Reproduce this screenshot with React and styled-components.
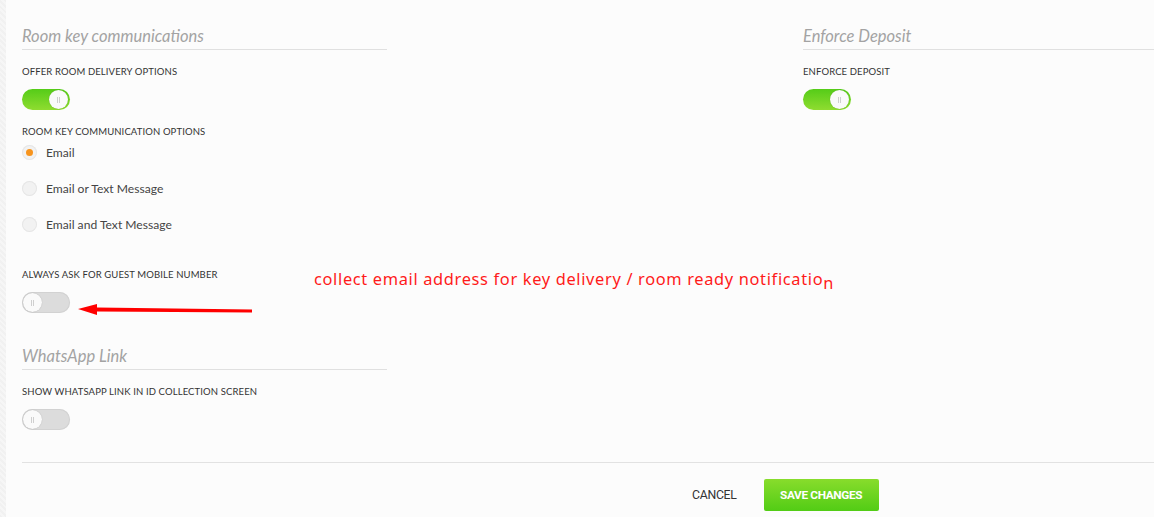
import React from "react";
import styled, { createGlobalStyle, css } from "styled-components";

const Global = createGlobalStyle`
  html, body { margin: 0; padding: 0; background: #fcfcfc; }
  body { font-family: Lato, "Open Sans", sans-serif; color: #333; overflow: hidden; }
  * { box-sizing: border-box; }
`;

const Page = styled.div`
  position: relative;
  width: 1154px;
  height: 517px;
  display: flex;
  background: #fcfcfc;
  overflow: hidden;
`;

const Strip = styled.div`
  width: 6px;
  flex: none;
  background: repeating-linear-gradient(45deg, #f1f1f1 0 2px, #f6f6f6 2px 4px);
`;

const Main = styled.div`
  flex: 1;
  padding: 26px 0 0 16px;
  display: flex;
  flex-direction: column;
`;

const Columns = styled.div`
  display: flex;
  gap: 416px;
`;

const Column = styled.div`
  width: ${(p) => p.$w}px;
  flex: none;
  display: flex;
  flex-direction: column;
`;

const SectionTitle = styled.div`
  font-style: italic;
  font-size: 16.5px;
  line-height: 20px;
  color: #a3a3a3;
  padding-bottom: 3px;
  border-bottom: 1px solid #e0e0e0;
  margin-top: ${(p) => p.$mt || 0}px;
`;

const Label = styled.div`
  font-size: 9.5px;
  line-height: 12px;
  letter-spacing: 0.12px;
  text-transform: uppercase;
  color: #333;
  margin-top: ${(p) => p.$mt}px;
`;

const Toggle = styled.div`
  margin-top: 11px;
  width: 48px;
  height: 21px;
  border-radius: 11px;
  position: relative;
  ${(p) =>
    p.$on
      ? css`
          background: linear-gradient(#55cc18, #8fdc30);
        `
      : css`
          background: #dcdcdc;
          box-shadow: inset 0 0 0 1px #d2d2d2;
        `}
`;

const Knob = styled.div`
  position: absolute;
  top: 1px;
  ${(p) => (p.$on ? "right: 2px;" : "left: 1px;")}
  width: 19px;
  height: 19px;
  border-radius: 50%;
  background: #fafafa;
  box-shadow: 0 0 1px rgba(0, 0, 0, 0.25);
  display: flex;
  align-items: center;
  justify-content: center;
  gap: 1px;
  &::before, &::after {
    content: "";
    width: 1px;
    height: 6px;
    background: #cfcfcf;
  }
`;

const RadioRow = styled.div`
  display: flex;
  align-items: center;
  height: 20px;
  margin-top: ${(p) => p.$mt}px;
  font-size: 12.1px;
  color: #444;
`;

const RadioCircle = styled.span`
  width: 15px;
  height: 15px;
  border-radius: 50%;
  background: #f2f2f2;
  box-shadow: inset 0 0 0 1px #e6e6e6;
  margin-right: 9px;
  display: flex;
  align-items: center;
  justify-content: center;
  &::after {
    content: "";
    display: ${(p) => (p.$checked ? "block" : "none")};
    width: 7px;
    height: 7px;
    border-radius: 50%;
    background: #f7941d;
  }
`;

const Footer = styled.div`
  margin-top: 32px;
  border-top: 1px solid #e2e2e2;
  padding-top: 16px;
  padding-left: 670px;
  display: flex;
  align-items: center;
`;

const CancelBtn = styled.button`
  border: none;
  background: none;
  font-family: Roboto, sans-serif;
  font-size: 12.3px;
  letter-spacing: -0.3px;
  color: #333;
  padding: 0;
  margin-right: 27px;
  cursor: pointer;
`;

const SaveBtn = styled.button`
  border: none;
  border-radius: 2px;
  width: 115px;
  height: 32px;
  background: linear-gradient(#88dc2c, #52cc15);
  color: #fff;
  font-family: Roboto, sans-serif;
  font-weight: 700;
  font-size: 11.8px;
  letter-spacing: -0.35px;
  cursor: pointer;
`;

const Note = styled.div`
  position: absolute;
  left: 314px;
  top: 267px;
  font-family: "Noto Sans", "Open Sans", sans-serif;
  font-size: 16.4px;
  letter-spacing: 0.66px;
  color: #ff1a1a;
  white-space: nowrap;
`;

const Sub = styled.span`
  position: relative;
  top: 4px;
`;

const Arrow = styled.svg`
  position: absolute;
  left: 76px;
  top: 302px;
`;

const radios = [
  { label: "Email", checked: true },
  { label: "Email or Text Message" },
  { label: "Email and Text Message" },
];

export default function App() {
  return (
    <Page>
      <Global />
      <Strip />
      <Main>
        <Columns>
          <Column $w={365}>
            <SectionTitle>Room key communications</SectionTitle>
            <Label $mt={16}>Offer room delivery options</Label>
            <Toggle $on>
              <Knob $on />
            </Toggle>
            <Label $mt={16}>Room key communication options</Label>
            {radios.map((r, i) => (
              <RadioRow key={r.label} $mt={i === 0 ? 4 : 16}>
                <RadioCircle $checked={r.checked} />
                {r.label}
              </RadioRow>
            ))}
            <Label $mt={35}>Always ask for guest mobile number</Label>
            <Toggle>
              <Knob />
            </Toggle>
            <SectionTitle $mt={33}>WhatsApp Link</SectionTitle>
            <Label $mt={16}>Show WhatsApp link in ID collection screen</Label>
            <Toggle>
              <Knob />
            </Toggle>
          </Column>
          <Column $w={360}>
            <SectionTitle>Enforce Deposit</SectionTitle>
            <Label $mt={16}>Enforce deposit</Label>
            <Toggle $on>
              <Knob $on />
            </Toggle>
          </Column>
        </Columns>
        <Footer>
          <CancelBtn>CANCEL</CancelBtn>
          <SaveBtn>SAVE CHANGES</SaveBtn>
        </Footer>
      </Main>
      <Note>
        collect email address for key delivery / room ready notificatio<Sub>n</Sub>
      </Note>
      <Arrow width="180" height="16" viewBox="0 0 180 16">
        <path d="M2 7 L21 2 L21 5.5 L176 7.5 L176 10.5 L21 9.5 L21 13 Z" fill="#ff0000" />
      </Arrow>
    </Page>
  );
}
